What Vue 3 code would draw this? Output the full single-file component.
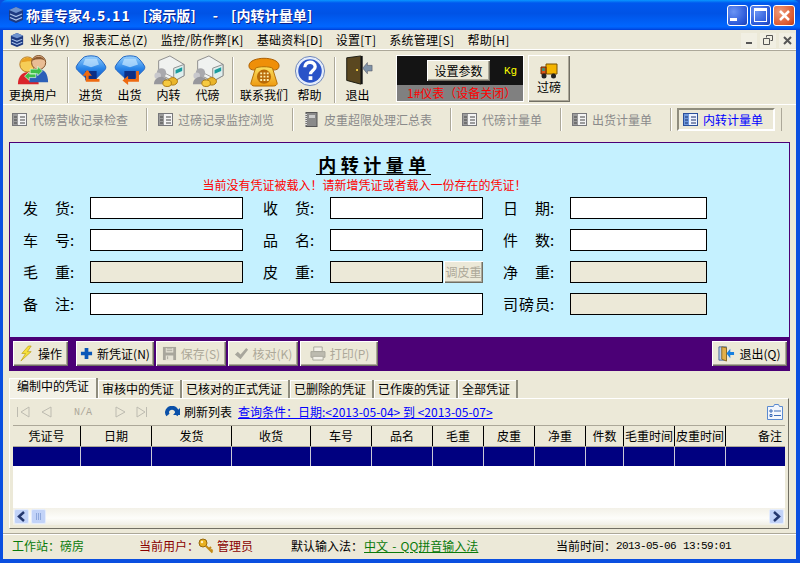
<script setup>
const menus = ["业务(Y)", "报表汇总(Z)", "监控/防作弊[K]", "基础资料[D]", "设置[T]", "系统管理[S]", "帮助[H]"];
const sheets = [
  { name: "代磅营收记录检查", icon: "i-doc" },
  { name: "过磅记录监控浏览", icon: "i-doc" },
  { name: "皮重超限处理汇总表", icon: "i-book" },
  { name: "代磅计量单", icon: "i-doc" },
  { name: "出货计量单", icon: "i-doc" }
];
const voucherTabs = ["审核中的凭证", "已核对的正式凭证", "已删除的凭证", "已作废的凭证", "全部凭证"];
const columns = ["凭证号", "日期", "发货", "收货", "车号", "品名", "毛重", "皮重", "净重", "件数", "毛重时间", "皮重时间", "备注"];
</script>

<template>
  <div class="window">
    <svg class="defs" width="0" height="0">
      <defs>
        <linearGradient id="g-box" x1="0" y1="0" x2="0" y2="1">
          <stop offset="0" stop-color="#9ad2fc" />
          <stop offset="0.55" stop-color="#2a86ea" />
          <stop offset="1" stop-color="#0f55c4" />
        </linearGradient>
        <linearGradient id="g-phone" x1="0" y1="0" x2="0" y2="1">
          <stop offset="0" stop-color="#fbe060" />
          <stop offset="1" stop-color="#ee9a10" />
        </linearGradient>
      </defs>
      <symbol id="i-app" viewBox="0 0 16 16">
        <path d="M8 0l7 3v10l-7 3-7-3V3z" fill="#1d3a82" />
        <path d="M1 3l7 3 7-3-7-3z" fill="#6f93cf" />
        <path d="M2 7l6 2.500L14 7M2 10.500L8 13l6-2.500" fill="none" stroke="#a9c2ea" stroke-width="1.200" />
      </symbol>
      <symbol id="i-doc" viewBox="0 0 15 15">
        <rect x="0.500" y="1.500" width="14" height="12" fill="#f4f4f4" stroke="#77777a" />
        <rect x="1" y="2" width="5" height="11" fill="#9c9c9c" />
        <path d="M2 5h3M2 8h3M2 11h3M8 5h5M8 8h5M8 11h5" stroke="#444" />
      </symbol>
      <symbol id="i-doc-on" viewBox="0 0 15 15">
        <rect x="0.500" y="1.500" width="14" height="12" fill="#eef4ff" stroke="#2b4f9a" />
        <rect x="1" y="2" width="5" height="11" fill="#6f9ade" />
        <path d="M2 5h3M2 8h3M2 11h3M8 5h5M8 8h5M8 11h5" stroke="#1b2f6a" />
      </symbol>
      <symbol id="i-book" viewBox="0 0 15 15">
        <rect x="2" y="0.500" width="11" height="14" fill="#8a8a8a" stroke="#555" />
        <path d="M2 2v11" stroke="#ddd" stroke-width="2" stroke-dasharray="1 1" />
        <rect x="5" y="3" width="6" height="3" fill="#ccc" />
      </symbol>
      <symbol id="i-users" viewBox="0 0 34 34">
        <path d="M1 31c0-9 5-13 11-13s11 4 11 13z" fill="#d9232a" />
        <path d="M13 29c0-10 5-14 10-14s10 4 10 14z" fill="#2a5fb8" />
        <circle cx="11" cy="10" r="8" fill="#f6cd57" stroke="#b5761f" />
        <path d="M4 8c2-6 11-7 14-1-4-1-10 0-14 1z" fill="#e8a022" />
        <circle cx="23" cy="8" r="7.500" fill="#e9bd95" stroke="#7a4a20" />
        <path d="M16 6c2-5 11-6 14 0-4-2-9-2-14 0z" fill="#8a5a30" />
        <path d="M14 15h8v-3l5 5-5 5v-2h-8zM20 20h-7v-2l-5 4.500L13 27v-3h7z" fill="#3fbf4a" stroke="#e8ffe8" stroke-width="0.700" />
      </symbol>
      <symbol id="i-in" viewBox="0 0 34 34">
        <path d="M10 2c4-1.500 10-1.500 14 0 3 2 7 7 8.500 10 .5 1.500 0 3-1 4l-9 9H12L2.500 16c-1-1-1.500-2.500-1-4C3 9 7 4 10 2z" fill="url(#g-box)" stroke="#1a5fc0" />
        <path d="M11 4h12l2.500 6-8.500 3-8.500-3z" fill="#c4e6ff" opacity="0.700" />
        <path d="M11 17h12v10H11z" fill="#0c2f86" />
        <path d="M13 17v10h13" fill="none" stroke="#ee6a10" stroke-width="3" />
        <path d="M8 22l5-6 5 6z" fill="#ee6a10" />
      </symbol>
      <symbol id="i-out" viewBox="0 0 34 34">
        <path d="M10 2c4-1.500 10-1.500 14 0 3 2 7 7 8.500 10 .5 1.500 0 3-1 4l-9 9H12L2.500 16c-1-1-1.500-2.500-1-4C3 9 7 4 10 2z" fill="url(#g-box)" stroke="#1a5fc0" />
        <path d="M11 4h12l2.500 6-8.500 3-8.500-3z" fill="#c4e6ff" opacity="0.700" />
        <path d="M11 17h12v10H11z" fill="#0c2f86" />
        <path d="M25 17v10H13" fill="none" stroke="#ee6a10" stroke-width="3" />
        <path d="M15 22l-6 5 6 5z" fill="#ee6a10" />
      </symbol>
      <symbol id="i-van" viewBox="0 0 34 34">
        <path d="M6 6l12-5 15 9v12l-11 6-16-8z" fill="#f0f2f0" stroke="#8a8a8a" />
        <path d="M22 14l11-4v12l-11 6z" fill="#dfeeee" stroke="#8a8a8a" />
        <path d="M24 16l7-3v4l-7 3z" fill="#1a9c9c" />
        <path d="M6 16l16 8" stroke="#9a9a9a" />
        <circle cx="9" cy="19" r="5" fill="#a9a9ad" />
        <circle cx="5" cy="22" r="3.500" fill="#c8c8cc" />
        <path d="M1 31c0-5 4-8 8-8s8 3 8 8z" fill="#97979c" />
        <ellipse cx="21" cy="28" rx="5" ry="4" fill="#eab52a" stroke="#a87810" />
        <ellipse cx="15" cy="30" rx="4.500" ry="3.500" fill="#f6ca40" stroke="#a87810" />
      </symbol>
      <symbol id="i-phone" viewBox="0 0 34 34">
        <path d="M1 11C2 1 32 1 33 11c0 3-1 5-7 5-1-4-17-4-18 0-6 0-7-2-7-5z" fill="#ef8f08" stroke="#a85c00" />
        <path d="M8 14c3-2 15-2 18 0l5 16c0 2-2 3-4 3H7c-2 0-4-1-4-3z" fill="url(#g-phone)" stroke="#b06a00" />
        <circle cx="17" cy="23" r="7.500" fill="#b86a08" />
        <path d="M13 19.500h2M16.500 19.500h2M20 19.500h2M13 23h2M16.500 23h2M20 23h2M13 26.500h2M16.500 26.500h2M20 26.500h2" stroke="#fff0b0" stroke-width="2" />
      </symbol>
      <symbol id="i-help" viewBox="0 0 34 34">
        <circle cx="17" cy="17" r="15.500" fill="#e4ecfa" stroke="#6a82b8" />
        <circle cx="17" cy="17" r="12.500" fill="#2a53c8" />
        <path d="M11.500 13c0-7 11-7 11-.500 0 4-5 4-5 8" fill="none" stroke="#fff" stroke-width="3.500" />
        <rect x="15.500" y="22.500" width="4" height="4" fill="#fff" />
      </symbol>
      <symbol id="i-exit" viewBox="0 0 34 34">
        <path d="M5 3l15-2v30L5 27z" fill="#5a4720" stroke="#1a1a10" />
        <path d="M20 1h2v30h-2z" fill="#111" />
        <path d="M15 15h2v2h-2z" fill="#e6c040" />
        <path d="M32 11v6h-5v3l-5-6 5-6v3z" fill="#7f93a8" stroke="#445" stroke-width="0.500" />
      </symbol>
      <symbol id="i-truck" viewBox="0 0 18 16">
        <path d="M6 1h11v10H6z" fill="#f4b400" stroke="#7a5200" />
        <path d="M1 4h5v7H1z" fill="#d9541a" stroke="#6a2a00" />
        <path d="M2 5h3v3H2z" fill="#4a8a70" />
        <circle cx="4" cy="13" r="2.500" fill="#222" />
        <circle cx="13.500" cy="13" r="2.500" fill="#222" />
      </symbol>
      <symbol id="i-bolt" viewBox="0 0 16 18">
        <path d="M10 1L3 9h4l-5 8 11-10H9l4-6z" fill="#f6e03a" stroke="#b89a10" stroke-width="0.700" />
      </symbol>
      <symbol id="i-plus" viewBox="0 0 14 14">
        <path d="M5 1h4v4h4v4H9v4H5V9H1V5h4z" fill="#0a58b8" />
      </symbol>
      <symbol id="i-save" viewBox="0 0 16 16">
        <path d="M1 1h14v14H1z" fill="#a8a69c" />
        <path d="M4 2h8v5H4zM4 10h8v5H4z" fill="#e6e3d6" />
        <path d="M5 3h6M5 5h6M6 11v3" stroke="#a8a69c" />
      </symbol>
      <symbol id="i-check" viewBox="0 0 16 16">
        <path d="M1 9l3-3 3 3 6-7 2 2-8 10z" fill="#a8a69c" />
      </symbol>
      <symbol id="i-print" viewBox="0 0 18 16">
        <path d="M5 1h9v5H5z" fill="#f2f0e8" stroke="#a8a69c" />
        <path d="M2 6h15v6H2z" fill="#bdbbb0" stroke="#a8a69c" />
        <path d="M4 11h11v4H4z" fill="#f2f0e8" stroke="#a8a69c" />
      </symbol>
      <symbol id="i-leave" viewBox="0 0 18 18">
        <path d="M1 2h8v14H1z" fill="#b8cfee" stroke="#4a6a9a" />
        <path d="M4 2l5 1v14l-5-2z" fill="#e2b04a" stroke="#8a6a20" />
        <path d="M17 7.500v3h-4V14l-4-5 4-5v3.500z" fill="#1680e0" />
      </symbol>
      <symbol id="i-refresh" viewBox="0 0 15 13">
        <path d="M3 9a5 4.500 0 1 1 8 0" fill="none" stroke="#0a50a8" stroke-width="4" />
        <path d="M15 2v7H8z" fill="#0a50a8" />
        <circle cx="7" cy="6.500" r="1.500" fill="#ece9d8" />
      </symbol>
      <symbol id="i-key" viewBox="0 0 16 16">
        <circle cx="5" cy="5" r="4" fill="#e8b020" stroke="#96680c" />
        <circle cx="4" cy="4" r="1.200" fill="#fff2c0" />
        <path d="M7.500 7.500l7 7M11 11l2-2M13 13l1.500-1.500" stroke="#c48a14" stroke-width="2" fill="none" />
      </symbol>
      <symbol id="i-list" viewBox="0 0 16 16">
        <path d="M.500 2.500h6l1-2h4l1 2h3v13H.500z" fill="#f2f6fc" stroke="#5a8ad0" />
        <path d="M3 6h2v2H3zM3 10.500h2v2H3z" fill="none" stroke="#3a6ab8" />
        <path d="M7 7h7M7 11.500h7" stroke="#3a6ab8" />
      </symbol>
    </svg>

    <header class="titlebar">
      <svg class="title-icon" width="16" height="16"><use href="#i-app" /></svg>
      <div class="title-text">
        <span>称重专家</span>
        <span class="ver">4.5.11</span>
        <span class="tag">[演示版]</span>
        <span class="dash">-</span>
        <span class="tag">[内转计量单]</span>
      </div>
      <div class="win-btns">
        <button class="win-btn"><i class="min-mark"></i></button>
        <button class="win-btn"><i class="max-mark"></i></button>
        <button class="win-btn close">
          <svg width="13" height="13" viewBox="0 0 13 13"><path d="M2 2l9 9M11 2l-9 9" stroke="#fff" stroke-width="2.500" /></svg>
        </button>
      </div>
    </header>

    <main class="client">
      <nav class="menubar">
        <svg class="menu-icon" width="14" height="16"><use href="#i-app" /></svg>
        <span v-for="m in menus" :key="m" class="menu-item">{{ m }}</span>
        <div class="mdi">
          <span class="mdi-btn">
            <svg width="9" height="9" viewBox="0 0 9 9"><path d="M1 7h6" stroke="#555" stroke-width="2" /></svg>
          </span>
          <span class="mdi-btn">
            <svg width="10" height="10" viewBox="0 0 10 10"><path d="M3.500 2.500V.500h6v5h-2M.500 3.500h6v6h-6z" fill="none" stroke="#555" /></svg>
          </span>
          <span class="mdi-btn">
            <svg width="9" height="9" viewBox="0 0 9 9"><path d="M1 1l7 7M8 1L1 8" stroke="#555" stroke-width="2" /></svg>
          </span>
        </div>
      </nav>

      <section class="toolbar">
        <div class="tool wide first"><svg width="32" height="32"><use href="#i-users" /></svg><span>更换用户</span></div>
        <i class="tool-sep"></i>
        <div class="tool"><svg width="32" height="32"><use href="#i-in" /></svg><span>进货</span></div>
        <div class="tool"><svg width="32" height="32"><use href="#i-out" /></svg><span>出货</span></div>
        <div class="tool"><svg width="32" height="32"><use href="#i-van" /></svg><span>内转</span></div>
        <div class="tool"><svg width="32" height="32"><use href="#i-van" /></svg><span>代磅</span></div>
        <i class="tool-sep"></i>
        <div class="tool wide contact"><svg width="32" height="32"><use href="#i-phone" /></svg><span>联系我们</span></div>
        <div class="tool"><svg width="32" height="32"><use href="#i-help" /></svg><span>帮助</span></div>
        <i class="tool-sep"></i>
        <div class="tool"><svg width="32" height="32"><use href="#i-exit" /></svg><span>退出</span></div>

        <div class="meter">
          <div class="meter-top">
            <span class="raised setting">设置参数</span>
            <span class="kg">Kg</span>
          </div>
          <div class="meter-status">1#仪表（设备关闭）</div>
        </div>
        <div class="raised weigh">
          <svg width="18" height="16"><use href="#i-truck" /></svg>
          <span>过磅</span>
        </div>
      </section>

      <section class="sheetbar">
        <div v-for="s in sheets" :key="s.name" class="sheet">
          <svg width="15" height="15"><use :href="'#' + s.icon" /></svg>
          <span>{{ s.name }}</span>
        </div>
        <div class="sheet-active">
          <svg width="15" height="15"><use href="#i-doc-on" /></svg>
          <span>内转计量单</span>
        </div>
        <i class="sheet-end"></i>
      </section>

      <section class="voucher">
        <div class="form-area">
          <h1 class="form-title"><span>内转计量单</span></h1>
          <p class="notice">当前没有凭证被载入！请新增凭证或者载入一份存在的凭证！</p>
          <div class="form-grid">
            <label class="lbl"><span>发货</span>:</label><div class="inp"></div>
            <label class="lbl l2"><span>收货</span>:</label><div class="inp"></div>
            <label class="lbl l2"><span>日期</span>:</label><div class="inp"></div>

            <label class="lbl"><span>车号</span>:</label><div class="inp"></div>
            <label class="lbl l2"><span>品名</span>:</label><div class="inp"></div>
            <label class="lbl l2"><span>件数</span>:</label><div class="inp"></div>

            <label class="lbl"><span>毛重</span>:</label><div class="inp off"></div>
            <label class="lbl l2"><span>皮重</span>:</label>
            <div class="tare">
              <div class="inp off"></div>
              <span class="raised tare-btn">调皮重</span>
            </div>
            <label class="lbl l2"><span>净重</span>:</label><div class="inp off"></div>

            <label class="lbl"><span>备注</span>:</label><div class="inp note"></div>
            <label class="lbl l2"><span>司磅员</span>:</label><div class="inp off"></div>
          </div>
        </div>
        <div class="action-bar">
          <span class="raised act act-op"><svg width="15" height="17"><use href="#i-bolt" /></svg>操作</span>
          <span class="raised act act-new"><svg width="13" height="13"><use href="#i-plus" /></svg>新凭证(N)</span>
          <span class="raised act act-off w70"><svg width="15" height="15"><use href="#i-save" /></svg>保存(S)</span>
          <span class="raised act act-off w70"><svg width="15" height="15"><use href="#i-check" /></svg>核对(K)</span>
          <span class="raised act act-off w78"><svg width="17" height="15"><use href="#i-print" /></svg>打印(P)</span>
          <span class="raised act act-exit"><svg width="17" height="17"><use href="#i-leave" /></svg>退出(Q)</span>
        </div>
      </section>

      <div class="tabs">
        <span class="tab tab-on">编制中的凭证</span>
        <span v-for="t in voucherTabs" :key="t" class="tab">{{ t }}</span>
      </div>

      <section class="page">
        <div class="nav-row">
          <svg width="36" height="14" viewBox="0 0 36 14">
            <path d="M1.500 2v10M13 2L5 7l8 5zM35 2l-9 5 9 5z" fill="#ece9d8" stroke="#bdbbb0" />
          </svg>
          <span class="na">N/A</span>
          <svg class="pager-next" width="33" height="14" viewBox="0 0 33 14">
            <path d="M1 2l9 5-9 5zM22 2l8 5-8 5zM31.500 2v10" fill="#ece9d8" stroke="#bdbbb0" />
          </svg>
          <svg class="refresh" width="15" height="13"><use href="#i-refresh" /></svg>
          <span class="refresh-text">刷新列表</span>
          <a class="query">查询条件：日期:&lt;2013-05-04&gt; 到 &lt;2013-05-07&gt;</a>
          <svg class="list-icon" width="16" height="16"><use href="#i-list" /></svg>
        </div>
        <div class="grid">
          <div class="grid-head">
            <span v-for="c in columns" :key="c" class="hcell">{{ c }}</span>
          </div>
          <div class="grid-row">
            <span v-for="c in columns" :key="c" class="rcell"></span>
          </div>
          <div class="grid-blank"></div>
          <div class="hscroll">
            <span class="sb-btn"><svg width="9" height="11" viewBox="0 0 9 11"><path d="M7 1L2 5.500 7 10" fill="none" stroke="#24386e" stroke-width="2.500" /></svg></span>
            <span class="sb-thumb"></span>
            <span class="sb-btn right"><svg width="9" height="11" viewBox="0 0 9 11"><path d="M2 1l5 4.500L2 10" fill="none" stroke="#24386e" stroke-width="2.500" /></svg></span>
          </div>
        </div>
      </section>

      <footer class="status">
        <span class="st-station">工作站：磅房</span>
        <span class="st-user">当前用户：<svg width="16" height="16"><use href="#i-key" /></svg><b>管理员</b></span>
        <span class="st-ime">默认输入法：<u>中文 - QQ拼音输入法</u></span>
        <span class="st-time">当前时间：<em>2013-05-06 13:59:01</em></span>
      </footer>
    </main>
  </div>
</template>

<style scoped>
.window {
  width: 800px;
  height: 563px;
  overflow: hidden;
  display: flex;
  flex-direction: column;
  font: 12px/14px "Noto Sans CJK SC", sans-serif;
  color: #000;
  background: #0a4fe0;
}
.defs {
  position: absolute;
}
.titlebar {
  height: 30px;
  flex: none;
  display: flex;
  align-items: center;
  padding: 0 5px 0 8px;
  border-radius: 7px 7px 0 0;
  background: linear-gradient(180deg, #0997ff 0, #0058ee 10%, #0053e6 45%, #0066ff 88%, #0058f0 94%, #003dd7 100%);
}
.title-text {
  margin-left: 2px;
  display: flex;
  font-weight: 700;
  font-size: 14px;
  color: #fff;
  text-shadow: 1px 1px 0 #0f1f8a;
  white-space: nowrap;
}
.ver {
  letter-spacing: 1.1px;
}
.tag {
  margin-left: 12px;
  letter-spacing: 0.1px;
}
.dash {
  margin-left: 17px;
  margin-right: 1px;
}
.win-btns {
  margin-left: auto;
  display: flex;
  gap: 2px;
}
.win-btn {
  width: 21px;
  height: 21px;
  padding: 0;
  display: flex;
  align-items: center;
  justify-content: center;
  border: 1px solid #fff;
  border-radius: 3px;
  background: radial-gradient(circle at 30% 30%, #6a94f4, #2a58d8 70%, #1d3fb0);
}
.win-btn.close {
  width: 22px;
  background: radial-gradient(circle at 30% 30%, #ee9a7a, #dc5a30 70%, #b83a1a);
}
.min-mark {
  width: 7px;
  height: 3px;
  margin: 9px 8px 0 0;
  background: #fff;
}
.max-mark {
  width: 11px;
  height: 10px;
  border: 1px solid #fff;
  border-top-width: 3px;
}
.client {
  flex: 1;
  margin: 0 4px 4px 3px;
  background: #ece9d8;
  display: flex;
  flex-direction: column;
}
.menubar {
  height: 20px;
  flex: none;
  display: flex;
  align-items: center;
  padding-left: 7px;
  box-shadow: inset 0 -1px 0 #fff;
  border-bottom: 1px solid #aca899;
}
.menu-icon {
  margin-right: 6px;
}
.menu-item {
  margin-right: 13px;
  white-space: nowrap;
  letter-spacing: 0.25px;
}
.mdi {
  margin-left: auto;
  display: flex;
  gap: 3px;
  margin-right: 1px;
}
.mdi-btn {
  width: 16px;
  height: 15px;
  display: flex;
  align-items: center;
  justify-content: center;
  background: #f1efe3;
}
.toolbar {
  height: 54px;
  flex: none;
  display: flex;
  align-items: flex-start;
  padding-top: 4px;
  box-sizing: border-box;
  border-bottom: 1px solid #fff;
}
.tool {
  width: 39px;
  display: flex;
  flex-direction: column;
  align-items: center;
  white-space: nowrap;
}
.tool svg {
  margin-bottom: 1px;
}
.tool.wide {
  width: 52px;
}
.tool.first {
  margin-left: 4px;
  margin-right: 3px;
}
.tool.contact {
  margin-left: 2px;
}
.tool-sep {
  width: 1px;
  height: 46px;
  margin: 2px 3px 0 0;
  background: #aca899;
  box-shadow: 1px 0 0 #fff;
}
.tool + .tool-sep {
  margin-left: 5px;
}
.meter {
  margin-left: 19px;
  width: 128px;
  height: 47px;
  box-sizing: border-box;
  border: 1px solid #fff;
  background: #141414;
  display: flex;
  flex-direction: column;
}
.meter-top {
  flex: 1;
  display: flex;
  align-items: center;
  padding-left: 30px;
}
.setting {
  width: 63px;
  height: 21px;
  display: flex;
  align-items: center;
  justify-content: center;
}
.kg {
  margin-left: 14px;
  color: #ff0;
  font: 11px "Liberation Mono", monospace;
}
.meter-status {
  height: 16px;
  background: #808080;
  color: #f00;
  padding-left: 10px;
  line-height: 16px;
  white-space: nowrap;
}
.raised {
  box-sizing: border-box;
  background: #ece9d8;
  box-shadow: inset 1px 1px 0 #fff, inset -1px -1px 0 #716f64, inset -2px -2px 0 #aca899;
}
.weigh {
  margin-left: 4px;
  width: 42px;
  height: 47px;
  display: flex;
  flex-direction: column;
  align-items: center;
  padding-top: 8px;
  gap: 1px;
}
.sheetbar {
  height: 37px;
  flex: none;
  display: flex;
  align-items: flex-start;
  padding-top: 3px;
  box-sizing: border-box;
}
.sheet {
  height: 23px;
  display: flex;
  align-items: center;
  padding: 0 18px 0 11px;
  color: #8a8a8a;
  border-right: 1px solid #aca899;
  box-shadow: 1px 0 0 #fff;
  white-space: nowrap;
}
.sheet:first-child {
  padding-left: 9px;
}
.sheet svg {
  margin-right: 5px;
}
.sheet-active {
  width: 98px;
  height: 23px;
  margin: 0 6px;
  box-sizing: border-box;
  display: flex;
  align-items: center;
  padding-left: 4px;
  color: #00f;
  border: 2px solid;
  border-color: #8f8d7e #fff #fff #8f8d7e;
}
.sheet-active svg {
  margin-right: 5px;
}
.sheet-end {
  width: 1px;
  height: 23px;
  background: #aca899;
}
.voucher {
  margin-left: 6px;
  width: 781px;
  height: 229px;
  flex: none;
  box-sizing: border-box;
  border: 1px solid #4b0076;
  background: #c5f1ff;
  display: flex;
  flex-direction: column;
}
.form-area {
  flex: 1;
}
.form-title {
  margin: 11px 0 0;
  height: 21px;
  text-align: center;
  padding-right: 52px;
  font-size: 18px;
  line-height: 20px;
  font-weight: 700;
}
.form-title span {
  display: inline-block;
  width: 115px;
  padding-left: 2px;
  box-sizing: border-box;
  letter-spacing: 4.5px;
  border-bottom: 1px solid #000;
  white-space: nowrap;
}
.notice {
  margin: 2px 0 0;
  height: 20px;
  padding-right: 70px;
  text-align: center;
  color: #f00;
  font-size: 12px;
  line-height: 16px;
  white-space: nowrap;
}
.form-grid {
  display: grid;
  grid-template-columns: 80px 153px 87px 153px 87px 137px;
  grid-auto-rows: 22px;
  row-gap: 10px;
}
.lbl {
  padding-left: 13px;
  display: flex;
  align-items: center;
  font-size: 15px;
  line-height: 22px;
}
.lbl span {
  width: 47px;
  text-align-last: justify;
  white-space: nowrap;
}
.l2 {
  padding-left: 20px;
}
.inp {
  box-sizing: border-box;
  border: 1px solid #000;
  background: #fff;
}
.inp.off {
  background: #ece9d8;
}
.inp.note {
  grid-column: span 3;
}
.tare {
  display: flex;
}
.tare .inp {
  width: 113px;
}
.tare-btn {
  width: 39px;
  margin-left: 1px;
  color: #aca899;
  line-height: 22px;
  text-align: center;
  white-space: nowrap;
}
.action-bar {
  height: 33px;
  flex: none;
  background: #4b0076;
  display: flex;
  align-items: flex-start;
  padding: 4px 0 0 3px;
  box-sizing: border-box;
}
.act {
  height: 25px;
  display: flex;
  align-items: center;
  justify-content: center;
  gap: 4px;
  margin-right: 2px;
  white-space: nowrap;
}
.act-op {
  width: 55px;
  margin-right: 8px;
}
.act-new {
  width: 78px;
}
.act-off {
  color: #aca899;
}
.w70 {
  width: 70px;
}
.w78 {
  width: 78px;
}
.act-exit {
  width: 75px;
  margin-left: auto;
}
.tabs {
  height: 20px;
  flex: none;
  margin-top: 7px;
  padding-left: 6px;
  display: flex;
  align-items: flex-end;
}
.tab {
  height: 18px;
  box-sizing: border-box;
  padding: 2px 6px 0 4px;
  border-right: 2px solid #8f8d7e;
  box-shadow: inset 1px 1px 0 #fff;
  white-space: nowrap;
  font-size: 12px;
}
.tab-on {
  height: 20px;
  padding: 1px 7px 0 8px;
  background: #f3f1e6;
}
.page {
  margin-left: 6px;
  width: 780px;
  height: 131px;
  flex: none;
  box-sizing: border-box;
  border: 1px solid;
  border-color: #fff #716f64 #716f64 #fff;
  display: flex;
  flex-direction: column;
  padding: 0 0 3px 3px;
}
.nav-row {
  height: 26px;
  flex: none;
  display: flex;
  align-items: center;
  padding-left: 3px;
}
.na {
  margin-left: 22px;
  width: 18px;
  color: #aca899;
  font: 10px "Liberation Mono", monospace;
}
.pager-next {
  margin-left: 23px;
}
.refresh {
  margin-left: 17px;
}
.refresh-text {
  margin-left: 4px;
}
.query {
  margin-left: 6px;
  color: #00f;
  text-decoration: underline;
  white-space: nowrap;
}
.list-icon {
  margin-left: auto;
  margin-right: 5px;
}
.grid {
  flex: 1;
  display: flex;
  flex-direction: column;
  margin-right: 3px;
  background: #fff;
  border-top: 1px solid #aca899;
}
.grid-head,
.grid-row {
  display: grid;
  grid-template-columns: 68px 71px 80px 79px 61px 61px 51px 51px 51px 38px 51px 51px 60px;
  flex: none;
}
.grid-head {
  height: 20px;
  background: #ece9d8;
}
.hcell {
  text-align: center;
  line-height: 20px;
  border-right: 1px solid #000;
  white-space: nowrap;
  overflow: hidden;
}
.hcell:last-child {
  border-right: 0;
  text-align: right;
  padding-right: 4px;
}
.grid-row {
  height: 20px;
  background: #000080;
  border-top: 1px solid #aca899;
  box-sizing: border-box;
}
.rcell {
  border-right: 1px solid #c8c8d8;
}
.rcell:last-child {
  border-right: 0;
}
.grid-blank {
  flex: 1;
}
.hscroll {
  height: 17px;
  flex: none;
  display: flex;
  gap: 2px;
  padding: 1px;
  box-sizing: border-box;
  background: linear-gradient(180deg, #f3f1e8, #fdfdfa 60%, #f0efe6);
}
.sb-btn {
  width: 15px;
  height: 15px;
  display: flex;
  align-items: center;
  justify-content: center;
  border-radius: 2px;
  background: #c2d3f8;
  border: 1px solid #e4ecfc;
  box-sizing: border-box;
}
.sb-btn.right {
  margin-left: auto;
}
.sb-thumb {
  width: 15px;
  height: 15px;
  border-radius: 2px;
  border: 1px solid #e4ecfc;
  box-sizing: border-box;
  background: repeating-linear-gradient(90deg, #c2d3f8 0 1px, #8fa8dc 1px 2px) center/7px 7px no-repeat #c2d3f8;
}
.status {
  flex: 1;
  margin-top: 4px;
  padding-bottom: 2px;
  display: flex;
  align-items: center;
  border-top: 1px solid #aca899;
  box-shadow: inset 0 1px 0 #fff;
  white-space: nowrap;
}
.status > span {
  display: flex;
  align-items: center;
}
.st-station {
  color: #0a7a0a;
  margin-left: 9px;
  width: 127px;
}
.st-user {
  color: #8a0000;
  width: 152px;
}
.st-user svg {
  margin: 0 3px 0 -1px;
}
.st-user b {
  font-weight: 400;
}
.st-ime {
  width: 265px;
}
.st-ime u {
  color: #0a7a0a;
  margin-left: 1px;
  word-spacing: 1.5px;
}
.st-time em {
  font: normal 11px "Liberation Mono", monospace;
  letter-spacing: -0.6px;
  word-spacing: 1px;
}
</style>

<style>
body {
  margin: 0;
  overflow: hidden;
  background: #0a4fe0;
}
</style>
